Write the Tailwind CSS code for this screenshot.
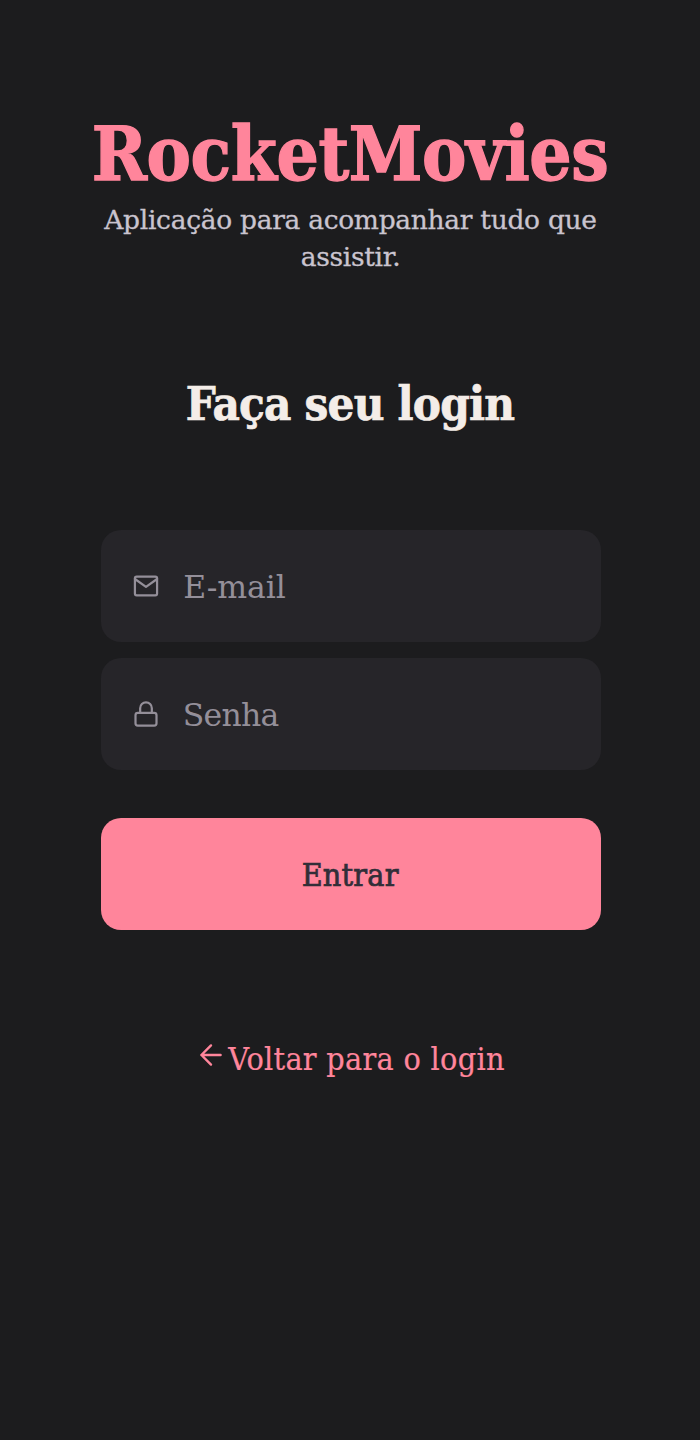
<!DOCTYPE html>
<html lang="pt-BR">
<head>
<meta charset="utf-8">
<title>RocketMovies</title>
<script src="https://cdn.jsdelivr.net/npm/@tailwindcss/browser@4"></script>
</head>
<body class="bg-[#1c1c1e]">
<main class="flex min-h-screen flex-col items-center bg-[#1c1c1e] pt-[104px] font-['Roboto_Slab','DejaVu_Serif_Condensed','DejaVu_Serif',serif]">
  <h1 class="h-[97px] whitespace-nowrap text-[74px] leading-[100px] font-bold tracking-[-0.4px] text-[#ff859b] [-webkit-text-stroke:1.3px_#ff859b]">RocketMovies</h1>
  <p class="ml-px text-center font-['Roboto_Slab','DejaVu_Serif',serif] text-[26.5px] leading-[37px] tracking-[-0.3px] whitespace-nowrap text-[#cac4cf] [-webkit-text-stroke:0.3px_#cac4cf]">Aplicação para acompanhar tudo que<br>assistir.</p>
  <h2 class="mt-[97px] whitespace-nowrap text-[47px] leading-[64px] font-bold tracking-[-0.8px] text-[#f4ede8] [-webkit-text-stroke:0.7px_#f4ede8]">Faça seu login</h2>
  <form class="mt-[93.6px] ml-[2.3px] flex w-[500.7px] flex-col">
    <label class="flex h-28 items-center rounded-[20px] bg-[#262529] pl-[31.5px] text-[#948f99]">
      <svg class="size-7" viewBox="0 0 24 24" fill="none" stroke="currentColor" stroke-width="1.9" stroke-linecap="round" stroke-linejoin="round"><rect x="2.500" y="4" width="19" height="16" rx="1.500"/><path d="M21.500 6L12 12.700 2.500 6"/></svg>
      <span class="ml-[23px] pt-[2px] font-['Roboto_Slab','DejaVu_Serif',serif] text-[31.5px] leading-10 tracking-[-0.1px]">E-mail</span>
    </label>
    <label class="mt-4 flex h-28 items-center rounded-[20px] bg-[#262529] pl-[31.5px] text-[#948f99]">
      <svg class="size-7" viewBox="0 0 24 24" fill="none" stroke="currentColor" stroke-width="1.9" stroke-linecap="round" stroke-linejoin="round"><rect x="3" y="11" width="18" height="11" rx="2"/><path d="M7 11V7a5 5 0 0 1 10 0v4"/></svg>
      <span class="ml-[22.5px] pt-[2px] font-['Roboto_Slab','DejaVu_Serif',serif] text-[31.5px] leading-10 tracking-[-0.8px]">Senha</span>
    </label>
    <button type="button" class="mt-12 flex h-28 items-center justify-center rounded-[20px] bg-[#ff859b] pt-[2px] pr-[2px] text-[32px] leading-10 tracking-[0.2px] text-[#312e38] [-webkit-text-stroke:0.7px_#312e38]">Entrar</button>
  </form>
  <a class="mt-[109px] flex items-start text-[#ff859b]">
    <svg class="size-8" viewBox="0 0 24 24" fill="none" stroke="currentColor" stroke-width="1.8" stroke-linecap="round" stroke-linejoin="round"><path d="M19.200 12H4.800M12 19.200L4.800 12 12 4.800"/></svg>
    <span class="ml-px whitespace-nowrap text-[32px] leading-10 tracking-[0.3px] [-webkit-text-stroke:0.2px_#ff859b]">Voltar para o login</span>
  </a>
</main>
</body>
</html>
